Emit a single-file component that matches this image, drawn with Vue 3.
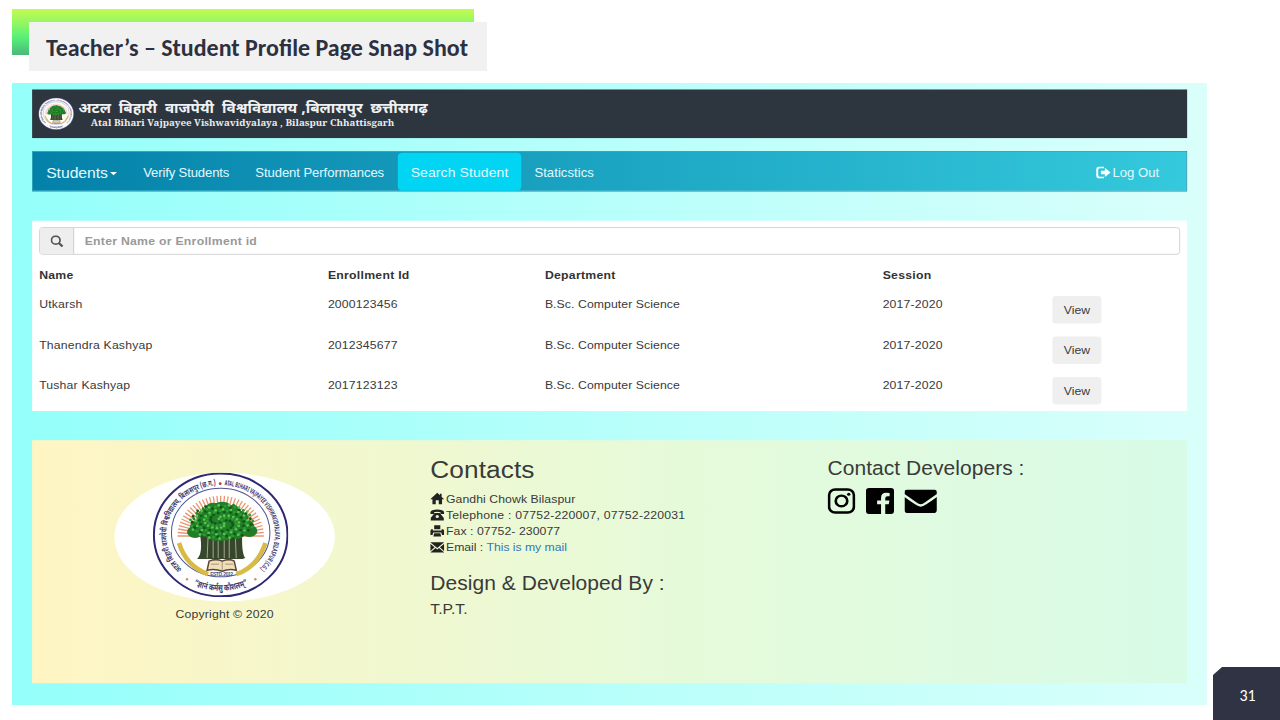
<script setup>
const rows = [
  { name: 'Utkarsh', id: '2000123456' },
  { name: 'Thanendra Kashyap', id: '2012345677' },
  { name: 'Tushar Kashyap', id: '2017123123' }
]
const rays = Array.from({ length: 37 }, (_, i) => {
  const a = Math.PI + (i * Math.PI) / 36
  return {
    x1: 67.5 + 20 * Math.cos(a), y1: 63 + 17 * Math.sin(a),
    x2: 67.5 + 43 * Math.cos(a), y2: 63 + 40 * Math.sin(a)
  }
})
const leaves = [
  [47, 54, 10, 8], [53, 44, 9, 8], [60, 38, 9, 8], [69, 36, 10, 7], [79, 40, 9, 8],
  [86, 46, 9, 8], [91, 54, 10, 8], [96, 58, 8, 6], [42, 59, 8, 6], [57, 54, 12, 10],
  [70, 48, 14, 12], [82, 57, 12, 9], [66, 60, 15, 8]
]
const specks = Array.from({ length: 190 }, (_, i) => {
  const a = i * 2.4
  const r = Math.sqrt(i / 190)
  return { x: 68.5 + 32 * r * Math.cos(a), y: 49 + 18 * r * Math.sin(a), c: ['#1d8426', '#56c64a', '#2f9a35', '#12561b'][(i * 7) % 4] }
})
</script>

<template>
  <main class="slide">
    <svg class="defs" width="0" height="0">
      <defs>
        <path id="arcL" d="M29.3 96.1 A54 49 0 0 1 65.6 12.5" />
        <path id="arcR" d="M71.3 12.6 A54 49 0 0 1 105.7 96.1" />
        <path id="arcB" d="M32.5 107.4 A61 56 0 0 0 102.5 107.4" />
        <symbol id="seal" viewBox="0 0 135 124" preserveAspectRatio="none">
          <ellipse cx="67.5" cy="62" rx="66.5" ry="61" fill="#fff" stroke="#2e2873" stroke-width="2" />
          <ellipse cx="67.5" cy="59.5" rx="49" ry="44" fill="#fff" stroke="#4d5295" stroke-width="1" />
          <g stroke="#e99771" stroke-width="1.3">
            <line v-for="(r, i) in rays" :key="i" :x1="r.x1" :y1="r.y1" :x2="r.x2" :y2="r.y2" />
          </g>
          <path d="M26 70 Q33 93 55 101" fill="none" stroke="#d8bb45" stroke-width="4.5" />
          <path d="M112 70 Q104 94 83 101" fill="none" stroke="#d8bb45" stroke-width="4.5" />
          <path d="M44 86 Q50 80 47 62 L63 60 L67 68 L73 60 L89 60 Q88 80 92 85 L89 86Z" fill="#37472c" />
          <path d="M55 62 L54 85 M60 62 L60 85 M65 64 L65 85 M71 64 L71 85 M76 62 L76 85 M82 62 L83 85" stroke="#a7a78b" stroke-width="1" />
          <ellipse v-for="(l, i) in leaves" :key="'l' + i" :cx="l[0]" :cy="l[1]" :rx="l[2]" :ry="l[3]" fill="#227d2a" />
          <circle v-for="(s, i) in specks" :key="'s' + i" :cx="s.x" :cy="s.y" r="1.4" :fill="s.c" />
          <path d="M56 88 Q63 85 69 88 Q76 85 81 88 L83 97 Q76 95 69 98 Q62 95 54 97Z" fill="#eee1b9" stroke="#5e4638" stroke-width="1.5" />
          <path d="M69 88V98 M58 91H66 M72 91H80" stroke="#756050" stroke-width=".6" />
          <text class="est" x="57" y="103" textLength="23">ESTD. 2012</text>
          <g class="arc-text">
            <text><textPath href="#arcL" textLength="115" lengthAdjust="spacingAndGlyphs">अटल बिहारी वाजपेयी विश्वविद्यालय, बिलासपुर (छ.ग.)</textPath></text>
            <text class="latin"><textPath href="#arcR" textLength="115" lengthAdjust="spacingAndGlyphs">ATAL BIHARI VAJPAYEE VISHWAVIDYALAYA, BILASPUR (C.G.)</textPath></text>
            <text class="motto"><textPath href="#arcB" startOffset="9" textLength="56" lengthAdjust="spacingAndGlyphs">“ज्ञानं कर्मसु कौशलम्”</textPath></text>
          </g>
          <circle cx="67" cy="11" r="1.4" fill="#b54336" />
          <circle cx="34" cy="106" r="1.2" fill="#d58a60" /><circle cx="102" cy="106" r="1.2" fill="#d58a60" />
        </symbol>
      </defs>
    </svg>

    <div class="accent"></div>
    <h1 class="title"><svg width="458" height="49"><text x="17" y="34" textLength="422" lengthAdjust="spacingAndGlyphs">Teacher’s – Student Profile Page Snap Shot</text></svg></h1>

    <div class="frame">
      <div class="page">
        <header class="brand">
          <svg class="mini"><use href="#seal" width="41" height="40" /></svg>
          <svg class="brand-name" width="410" height="60">
            <text class="hindi" x="1" y="29" textLength="399" lengthAdjust="spacingAndGlyphs">अटल&nbsp; बिहारी&nbsp; वाजपेयी&nbsp; विश्वविद्यालय ,बिलासपुर&nbsp; छत्तीसगढ़</text>
            <text class="english" x="15" y="45" textLength="347" lengthAdjust="spacingAndGlyphs">Atal Bihari Vajpayee Vishwavidyalaya , Bilaspur Chhattisgarh</text>
          </svg>
        </header>

        <nav class="nav">
          <a class="students">Students<i class="caret"></i></a>
          <a class="verify">Verify Students</a>
          <a class="perf">Student Performances</a>
          <a class="active">Search Student</a>
          <a class="stat">Staticstics</a>
          <a class="logout">
            <svg width="17" height="15" viewBox="0 0 17 15"><path d="M9 1.2H4.2Q1.2 1.2 1.2 4.2V10.8Q1.2 13.8 4.2 13.8H9" fill="none" stroke="#fff" stroke-width="2.4" /><path d="M5.5 5.2H10V1.5L16.5 7.5L10 13V9.6H5.5Z" fill="#fff" /></svg>
            <span>Log Out</span>
          </a>
        </nav>

        <section class="panel">
          <div class="search">
            <span class="addon"><svg width="15" height="15" viewBox="0 0 15 15" fill="none" stroke="#555" stroke-width="2"><circle cx="6" cy="6" r="4.9" /><path d="M9.5 9.5L13.8 13.8" stroke-width="2.7" /></svg></span>
            <span class="placeholder">Enter Name or Enrollment id</span>
          </div>
          <div class="row head"><b>Name</b><b>Enrollment Id</b><b>Department</b><b>Session</b></div>
          <div v-for="r in rows" :key="r.id" class="row">
            <span>{{ r.name }}</span><span>{{ r.id }}</span><span class="dept">B.Sc. Computer Science</span><span>2017-2020</span><button>View</button>
          </div>
        </section>

        <footer class="footer">
          <div class="emblem">
            <div class="oval"><svg width="155" height="154"><use href="#seal" width="155" height="154" /></svg></div>
            <p>Copyright © 2020</p>
          </div>
          <div class="contacts">
            <h2>Contacts</h2>
            <ul>
              <li><svg viewBox="0 0 16 16"><path d="M8 1L0 9H2.5V15H6.3V10H9.7V15H13.5V9H16L13 6V2H11V4Z" /></svg>Gandhi Chowk Bilaspur</li>
              <li class="tel"><svg viewBox="0 0 16 16"><path d="M0 5Q1 1.5 8 1.5T16 5V7H11.7V5Q8 3.8 4.3 5V7H0Z" /><path fill-rule="evenodd" d="M5 6H11L15.5 12V15H.5V12ZM8 8.3A1.9 1.9 0 1 0 8 12.1A1.9 1.9 0 1 0 8 8.3" /></svg>Telephone : 07752-220007, 07752-220031</li>
              <li><svg viewBox="0 0 16 16"><path d="M4.5 1H11.5V6H4.5ZM1 6H3V7.5H13V6H15L16 8V13H13.5L12.5 10H3.5L2.5 13H0V8ZM4.5 11H11.5L12.5 15H3.5Z" /></svg>Fax : 07752- 230077</li>
              <li class="mail"><svg viewBox="0 0 16 16"><path d="M0 2H16L8 9ZM0 3.8L5 8.3L0 13ZM16 3.8L11 8.3L16 13ZM6 9.2L8 11L10 9.2L16 14.5H0Z" /></svg>Email : <a>This is my mail</a></li>
            </ul>
            <h3>Design &amp; Developed By :</h3>
            <h4>T.P.T.</h4>
          </div>
          <div class="devs">
            <h3>Contact Developers :</h3>
            <div class="social">
              <svg width="32" height="32" viewBox="0 0 32 32" fill="none" stroke="#000" stroke-width="3"><rect x="1.8" y="1.8" width="28.4" height="28.4" rx="7" /><circle cx="16" cy="16" r="6.6" /><circle cx="24.3" cy="7.7" r="1.9" fill="#000" stroke="none" /></svg>
              <svg width="32" height="32" viewBox="0 0 32 32"><path d="M3.5 0H28.5Q32 0 32 3.5V28.5Q32 32 28.5 32H22V20H26L26.8 15.5H22V12.5Q22 10.1 24.7 10.1H27V6.2Q25 5.8 23.2 5.8Q17.2 5.8 17.2 12V15.5H12.7V20H17.2V32H3.5Q0 32 0 28.5V3.5Q0 0 3.5 0Z" /></svg>
              <svg width="37" height="29" viewBox="0 0 37 29"><path d="M3.5 0H33.5Q37 0 37 3.5V5.5Q31 10 24 15.2Q20.5 18 18.5 18T13 15.2Q6 10 0 5.5V3.5Q0 0 3.5 0ZM0 9Q6 13.8 12 18Q16 21 18.5 21T25 18Q31 13.8 37 9V25.5Q37 29 33.5 29H3.5Q0 29 0 25.5Z" /></svg>
            </div>
          </div>
        </footer>
      </div>
    </div>
    <div class="number">31</div>
  </main>
</template>

<style>
body { margin: 0; overflow: hidden; }
</style>
<style scoped>
* { box-sizing: border-box; }
.slide { position: relative; width: 1280px; height: 720px; overflow: hidden; background: #fff; }
.defs { position: absolute; }
.accent { position: absolute; left: 12px; top: 9px; width: 462px; height: 46px; background: linear-gradient(#c4fa50, #8ff763 32%, #56f078 62%, #4bb77a); }
.title { position: absolute; left: 29px; top: 22px; width: 458px; height: 49px; margin: 0; background: #f1f1f1; }
.title svg { display: block; }
.title text { font: 700 23.5px Carlito, "Open Sans", sans-serif; fill: #2c3040; }
.frame { position: absolute; left: 12px; top: 83px; width: 1195px; height: 622px; overflow: hidden; }
.page { width: 1366px; height: 768px; padding: 8px 23px; transform: scale(.875, .81); transform-origin: 0 0; background: linear-gradient(90deg, #94fffa, #dafffb); font: 14px/20px Arial, "Liberation Sans", sans-serif; letter-spacing: .2px; color: #3a3a3a; }
.brand { height: 60px; background: #2d353f; display: flex; align-items: center; padding-left: 7px; }
.mini { width: 41px; height: 40px; }
.brand-name { margin-left: 4px; overflow: visible; }
.hindi { font: 700 18px "Noto Sans Devanagari", "Noto Sans", sans-serif; fill: #f0f1f2; letter-spacing: 0; }
.english { font: 700 11.5px "Noto Serif", "DejaVu Serif", serif; fill: #e8eaec; letter-spacing: 0; }
.nav { height: 50px; margin-top: 16px; display: flex; align-items: center; background: linear-gradient(90deg, #0481a9, #34c9dc); border: 1px solid #2095b2; color: #e2f9ff; font-size: 15px; letter-spacing: .3px; white-space: nowrap; }
.nav a:not(.active) { padding-top: 3px; }
.nav .students { width: 111px; padding: 2px 0 0 15px; font-size: 18px; letter-spacing: -.05px; }
.caret { display: inline-block; margin-left: 2px; vertical-align: middle; border: 4px solid transparent; border-top-color: #fff; border-bottom: 0; }
.verify { width: 128px; padding-left: 15px; letter-spacing: -.18px; }
.perf { width: 178px; padding-left: 15px; letter-spacing: -.1px; }
.active { width: 141px; height: 47px; line-height: 49px; text-align: center; border-radius: 5px; background: #02d4f3; font-size: 16px; letter-spacing: .1px; }
.stat { padding-left: 15px; letter-spacing: .05px; }
.logout { display: flex; align-items: center; gap: 2px; margin-left: auto; margin-right: 31px; letter-spacing: 0; }
.panel { height: 235px; margin-top: 36px; padding: 8px; background: #fff; }
.search { height: 34px; display: flex; border: 1px solid #ccc; border-radius: 4px; overflow: hidden; }
.addon { width: 39px; display: flex; align-items: center; justify-content: center; background: #eee; border-right: 1px solid #ccc; }
.placeholder { padding-left: 12px; line-height: 32px; font-weight: 700; color: #999; letter-spacing: .3px; }
.row { height: 50px; display: grid; grid-template-columns: 330px 248px 386px 194px 56px; }
.head { height: 45px; padding-top: 15px; margin-bottom: 1px; letter-spacing: .3px; color: #333; }
.row:not(.head) > span { padding-top: 4.5px; }
.row > .dept { letter-spacing: .08px; }
.row button { height: 34px; margin-top: 4.5px; padding: 0; border: 0; border-radius: 4px; background: #efefef; color: #3a3a3a; font: inherit; }
.footer { height: 300px; margin-top: 36px; display: grid; grid-template-columns: 455px 454px 1fr; background: linear-gradient(90deg, #fff5c3, #e6fad9 55%, #d8fbe7); }
.emblem { padding: 40px 0 0 94px; }
.oval { width: 252px; height: 159px; border-radius: 50%; background: #fff; padding: 0 0 0 44px; }
.oval svg { display: block; }
.emblem p { width: 252px; margin: 5px 0 0; text-align: center; }
.contacts { padding-top: 20px; }
h2, h3, h4 { margin: 0; font-weight: 400; line-height: 1.1; }
h2 { font-size: 30px; letter-spacing: .1px; }
ul { list-style: none; margin: 9px 0 22px; padding: 0; }
li { display: flex; align-items: center; white-space: pre; letter-spacing: .07px; }
.tel { letter-spacing: .23px; }
.mail { letter-spacing: -.05px; }
li svg { width: 16px; height: 16px; fill: #222; margin-right: 2px; }
li a { color: #337ab7; }
h3 { font-size: 24px; letter-spacing: .05px; }
h4 { font-size: 18px; margin-top: 10px; letter-spacing: 0; }
.devs { padding-top: 22px; }
.social { margin-top: 11px; display: flex; align-items: center; gap: 12px; }
.arc-text { font: 700 8px "Noto Sans Devanagari", "Liberation Sans", sans-serif; fill: #3d3970; letter-spacing: 0; }
.arc-text .latin { font-size: 7px; }
.arc-text .motto { font-size: 9px; }
.est { font: 700 5px "Liberation Sans", sans-serif; fill: #4d5180; }
.number { position: absolute; left: 1213px; top: 667px; width: 67px; height: 53px; padding-left: 2px; background: #2f3343; color: #fff; clip-path: polygon(9px 0, 100% 0, 100% 100%, 0 100%, 0 8px); text-align: center; font: 16px/57px Carlito, "Open Sans", sans-serif; }
</style>
